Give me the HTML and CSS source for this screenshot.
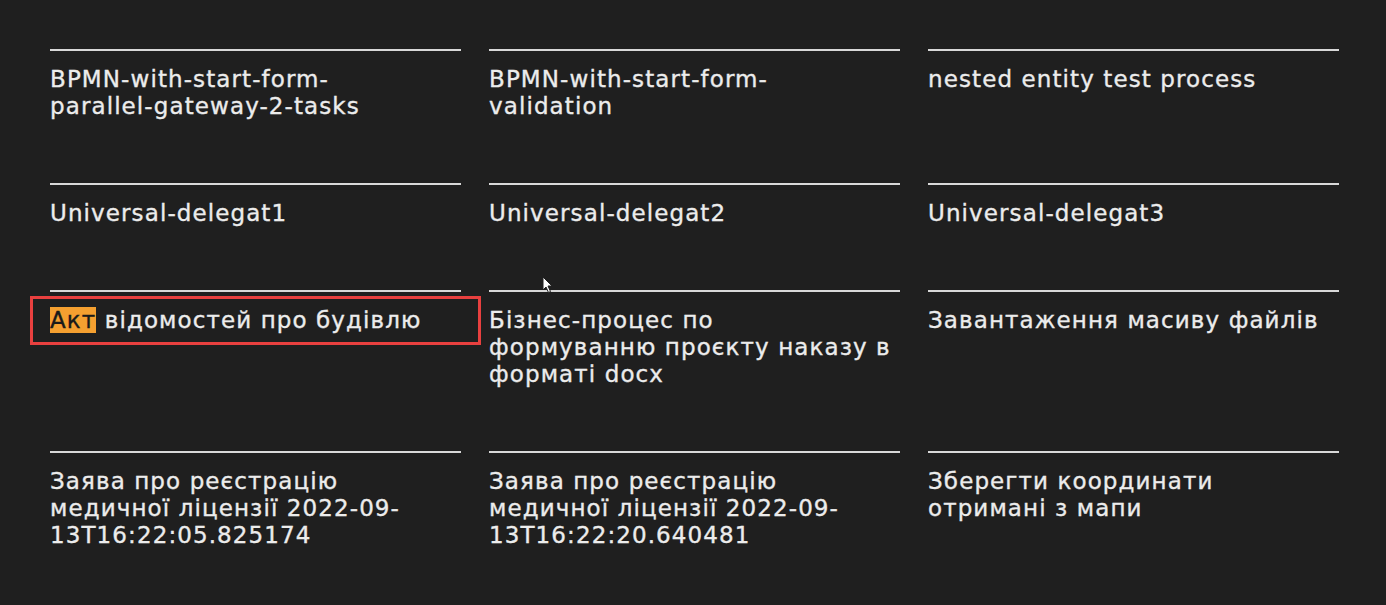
FILE: index.html
```html
<!DOCTYPE html>
<html lang="uk">
<head>
<meta charset="utf-8">
<title>Processes</title>
<link rel="stylesheet" href="styles.css">
</head>
<body>
<main class="page">
  <div class="grid">
    <div class="card"><p class="title">BPMN-with-start-form-<br>parallel-gateway-2-tasks</p></div>
    <div class="card"><p class="title">BPMN-with-start-form-<br>validation</p></div>
    <div class="card"><p class="title">nested entity test process</p></div>
    <div class="card"><p class="title">Universal-delegat1</p></div>
    <div class="card"><p class="title">Universal-delegat2</p></div>
    <div class="card"><p class="title">Universal-delegat3</p></div>
    <div class="card">
      <p class="title"><span class="hl">Акт</span> відомостей про будівлю</p>
      <span class="mark"></span>
    </div>
    <div class="card"><p class="title">Бізнес-процес по<br>формуванню проєкту наказу в<br>форматі docx</p></div>
    <div class="card"><p class="title">Завантаження масиву файлів</p></div>
    <div class="card"><p class="title">Заява про реєстрацію<br>медичної ліцензії 2022-09-<br>13T16:22:05.825174</p></div>
    <div class="card"><p class="title">Заява про реєстрацію<br>медичної ліцензії 2022-09-<br>13T16:22:20.640481</p></div>
    <div class="card"><p class="title">Зберегти координати<br>отримані з мапи</p></div>
  </div>
  <svg class="cursor" width="12" height="18" viewBox="0 0 12 18"><path d="M1 1 L1 14 L4 11 L6.5 16.5 L8.5 15.5 L6 10 L10 10 Z" fill="#fff" stroke="#222" stroke-width="1"/></svg>
</main>
</body>
</html>
```
FILE: styles.css
```css
html, body {
  margin: 0;
  padding: 0;
  background: #1f1f1f;
}
.page {
  position: relative;
  width: 1386px;
  height: 605px;
  overflow: hidden;
  box-sizing: border-box;
  padding: 49px 0 0 50px;
  font-family: "DejaVu Sans", "Noto Sans", sans-serif;
  color: #ececec;
}
.grid {
  display: grid;
  grid-template-columns: repeat(3, 411px);
  column-gap: 28px;
  row-gap: 24px;
}
.card {
  position: relative;
  border-top: 2px solid #d8d8d8;
  padding: 15px 0 39px 0;
}
.title {
  margin: 0;
  font-size: 23px;
  line-height: 27px;
  letter-spacing: 1.1px;
  white-space: nowrap;
  -webkit-text-stroke: 0.35px #ececec;
}
.hl {
  background: #f5a030;
  color: #1a1a1a;
  -webkit-text-stroke: 0.35px #1a1a1a;
}
.mark {
  position: absolute;
  left: -20px;
  top: 4px;
  width: 445px;
  height: 43px;
  border: 3px solid #e8403f;
}
.cursor {
  position: absolute;
  left: 542px;
  top: 276px;
}
```
